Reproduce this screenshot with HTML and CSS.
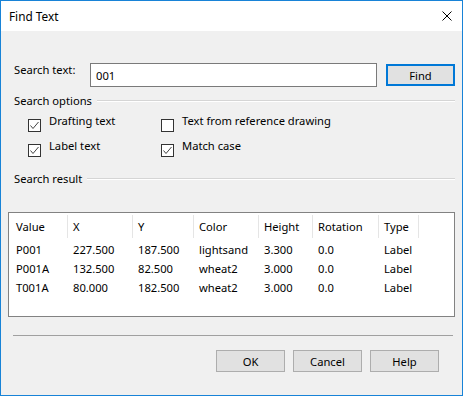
FILE: index.html
```html
<!DOCTYPE html>
<html lang="en">
<head>
  <meta charset="UTF-8">
  <title>Find Text</title>
  <link rel="stylesheet" href="styles.css">
</head>
<body>

  <div class="window">

    <!-- Title bar -->
    <div class="titlebar">
      <span class="title">Find Text</span>
      <svg class="close" width="10" height="10" viewBox="0 0 10 10">
        <path d="M0.5 0.5 L9.5 9.5 M9.5 0.5 L0.5 9.5" stroke="#000" stroke-width="1" fill="none"/>
      </svg>
    </div>

    <div class="content">

      <div class="search-row">
        <label class="search-label">Search text:</label>
        <div class="text-input">001</div>
        <button class="btn btn-default">Find</button>
      </div>

      <div class="group-title">
        <span>Search options</span>
        <div class="group-line"></div>
      </div>

      <div class="options">
        <div class="option">
          <span class="checkbox checked"><svg width="11" height="11" viewBox="0 0 11 11"><path d="M1.5 5.5 L4 8.5 L9.5 2" stroke="#444" stroke-width="1" fill="none"/></svg></span>
          <span>Drafting text</span>
        </div>
        <div class="option">
          <span class="checkbox"></span>
          <span>Text from reference drawing</span>
        </div>
        <div class="option">
          <span class="checkbox checked"><svg width="11" height="11" viewBox="0 0 11 11"><path d="M1.5 5.5 L4 8.5 L9.5 2" stroke="#444" stroke-width="1" fill="none"/></svg></span>
          <span>Label text</span>
        </div>
        <div class="option">
          <span class="checkbox checked"><svg width="11" height="11" viewBox="0 0 11 11"><path d="M1.5 5.5 L4 8.5 L9.5 2" stroke="#444" stroke-width="1" fill="none"/></svg></span>
          <span>Match case</span>
        </div>
      </div>

      <div class="group-title result-title">
        <span>Search result</span>
        <div class="group-line"></div>
      </div>

      <div class="list">
        <div class="list-head">
          <div class="col first">Value</div>
          <div class="col">X</div>
          <div class="col">Y</div>
          <div class="col">Color</div>
          <div class="col">Height</div>
          <div class="col">Rotation</div>
          <div class="col">Type</div>
        </div>
        <div class="list-row">
          <div class="cell first">P001</div>
          <div class="cell">227.500</div>
          <div class="cell">187.500</div>
          <div class="cell">lightsand</div>
          <div class="cell">3.300</div>
          <div class="cell">0.0</div>
          <div class="cell">Label</div>
        </div>
        <div class="list-row">
          <div class="cell first">P001A</div>
          <div class="cell">132.500</div>
          <div class="cell">82.500</div>
          <div class="cell">wheat2</div>
          <div class="cell">3.000</div>
          <div class="cell">0.0</div>
          <div class="cell">Label</div>
        </div>
        <div class="list-row">
          <div class="cell first">T001A</div>
          <div class="cell">80.000</div>
          <div class="cell">182.500</div>
          <div class="cell">wheat2</div>
          <div class="cell">3.000</div>
          <div class="cell">0.0</div>
          <div class="cell">Label</div>
        </div>
      </div>

      <div class="separator"></div>

      <div class="buttons">
        <button class="btn">OK</button>
        <button class="btn">Cancel</button>
        <button class="btn">Help</button>
      </div>

    </div>
  </div>

</body>
</html>
```

FILE: styles.css
```css
body {
  margin: 0;
  font-family: 'Noto Sans', 'Open Sans', sans-serif;
  font-size: 11.2px;
  line-height: 15px;
  color: #000;
  background: #fff;
}

.window {
  width: 461px;
  height: 394px;
  border: 1px solid #1883d7;
  background: #f0f0f0;
  display: flex;
  flex-direction: column;
}

/* Title bar */
.titlebar {
  height: 30px;
  background: #fff;
  display: flex;
  align-items: center;
  justify-content: space-between;
  padding: 0 10px 0 8px;
}

.title {
  font-size: 11.8px;
}

.close {
  display: block;
}

.content {
  padding: 32px 7px 0 7px;
  display: flex;
  flex-direction: column;
}

/* Search row */
.search-row {
  display: flex;
  align-items: flex-start;
  gap: 9px;
  padding-left: 6px;
}

.search-label {
  width: 67px;
  margin-top: -1px;
}

.text-input {
  flex: 1;
  height: 22px;
  border: 1px solid #7a7a7a;
  background: #fff;
  display: flex;
  align-items: center;
  padding-left: 5px;
}

.btn {
  width: 69px;
  height: 22px;
  border: 1px solid #adadad;
  background: #e1e1e1;
  font-family: inherit;
  font-size: inherit;
  color: #000;
  padding: 0;
}

.btn-default {
  border: 2px solid #0078d7;
  margin-top: 1px;
}

/* Group titles */
.group-title {
  display: flex;
  align-items: center;
  gap: 5px;
  padding-left: 6px;
  margin-top: 6px;
  height: 15px;
}

.group-line {
  flex: 1;
  height: 1px;
  background: #d5d5d5;
  border-bottom: 1px solid #fff;
  margin-top: 1px;
}

.result-title {
  margin-top: 14px;
}

/* Options */
.options {
  display: grid;
  grid-template-columns: 133px 1fr;
  row-gap: 6px;
  padding-left: 20px;
  margin-top: 5px;
}

.option {
  display: flex;
  align-items: flex-start;
  gap: 8px;
}

.checkbox {
  width: 11px;
  height: 11px;
  border: 1px solid #333;
  background: #fff;
  margin-top: 6px;
  display: flex;
}

/* List */
.list {
  margin-top: 26px;
  height: 103px;
  border: 1px solid #828282;
  background: #fff;
}

.list-head,
.list-row {
  display: grid;
  grid-template-columns: 59px 65px 61px 65px 54px 66px 40px;
}

.list-head {
  padding: 2px 0;
}

.col {
  height: 23px;
  line-height: 23px;
  padding-left: 5px;
  border-right: 1px solid #e5e5e5;
}

.list-row {
  height: 19px;
  line-height: 19px;
}

.cell {
  padding-left: 5px;
  white-space: nowrap;
}

.col.first,
.cell.first {
  padding-left: 7px;
}

.separator {
  margin: 18px 2px 0 5px;
  height: 1px;
  background: #a0a0a0;
}

.buttons {
  display: flex;
  justify-content: flex-end;
  gap: 8px;
  margin-top: 14px;
  padding-right: 16px;
}
```
